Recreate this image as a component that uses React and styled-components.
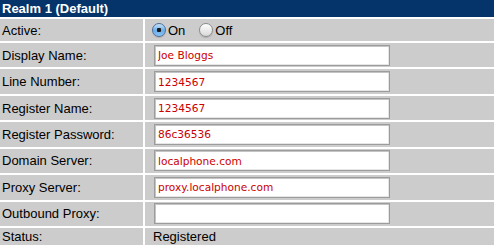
import React from "react";
import styled, { createGlobalStyle } from "styled-components";

const Global = createGlobalStyle`
  html, body { margin: 0; padding: 0; overflow: hidden; background: #fff; }
  body { font-family: "Liberation Sans", Arial, Helvetica, sans-serif; }
`;

const Table = styled.div`
  display: grid;
  grid-template-columns: 143px 1fr;
  column-gap: 2px;
  row-gap: 2px;
  width: 494px;
  background: #fff;
`;

const Header = styled.div`
  grid-column: 1 / -1;
  height: 17px;
  background: #043469;
  color: #fff;
  font-weight: bold;
  font-size: 13px;
  line-height: 17px;
  padding-left: 2px;
`;

const Label = styled.div`
  height: ${(p) => p.$h}px;
  background: #cccccc;
  color: #000;
  font-size: 13px;
  display: flex;
  align-items: center;
  padding-left: 2px;
`;

const Value = styled.div`
  height: ${(p) => p.$h}px;
  background: #cccccc;
  color: #000;
  font-size: 13px;
  display: flex;
  align-items: center;
  padding-left: ${(p) => p.$pad ?? 8}px;
`;

const TextInput = styled.input`
  box-sizing: border-box;
  width: 236px;
  height: 21px;
  margin: 0 0 0 1px;
  padding: 0 3px;
  border: 1px solid #9c9c9c;
  box-shadow: inset 1px 1px 0 #c4c4c4, inset -1px -1px 0 #e6e6e6;
  background: #fff;
  color: #cc0000;
  font-family: "DejaVu Sans", Verdana, sans-serif;
  font-size: 10.6px;
  outline: none;
`;

const RadioGroup = styled.div`
  display: flex;
  align-items: center;
`;

const RadioLabel = styled.label`
  display: flex;
  align-items: center;
  gap: 2px;
  margin-right: ${(p) => p.$mr ?? 0}px;
`;

const Radio = styled.input`
  appearance: none;
  -webkit-appearance: none;
  box-sizing: border-box;
  width: 14px;
  height: 14px;
  margin: 0;
  border-radius: 50%;
  border: 1px solid #8c8c8c;
  background: linear-gradient(#ffffff, #d8d8d8);
  box-shadow: 0 1px 1px rgba(0,0,0,0.15);
  &:checked {
    border-color: #4d6f9c;
    background: radial-gradient(circle at 50% 50%, #1a1a1a 0 2px, transparent 2.5px),
      linear-gradient(#c9e2f8, #6aaeea 55%, #8cc4f3);
  }
`;

const rows = [
  ["Display Name:", "Joe Bloggs"],
  ["Line Number:", "1234567"],
  ["Register Name:", "1234567"],
  ["Register Password:", "86c36536"],
  ["Domain Server:", "localphone.com"],
  ["Proxy Server:", "proxy.localphone.com"],
  ["Outbound Proxy:", ""],
];

export default function App() {
  return (
    <>
      <Global />
      <Table>
        <Header>Realm 1 (Default)</Header>
        <Label $h={22}>Active:</Label>
        <Value $h={22} $pad={7}>
          <RadioGroup>
            <RadioLabel $mr={14}>
              <Radio type="radio" name="active" defaultChecked />
              On
            </RadioLabel>
            <RadioLabel>
              <Radio type="radio" name="active" />
              Off
            </RadioLabel>
          </RadioGroup>
        </Value>
        {rows.map(([label, val]) => (
          <React.Fragment key={label}>
            <Label $h={24.43}>{label}</Label>
            <Value $h={24.43}>
              <TextInput defaultValue={val} />
            </Value>
          </React.Fragment>
        ))}
        <Label $h={18}>Status:</Label>
        <Value $h={18}>Registered</Value>
      </Table>
    </>
  );
}
